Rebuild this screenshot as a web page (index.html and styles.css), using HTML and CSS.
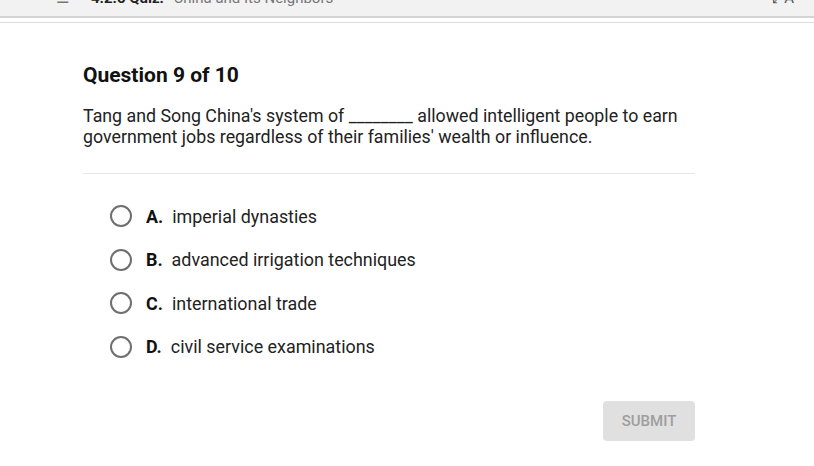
FILE: index.html
```html
<!DOCTYPE html>
<html lang="en">

<head>
  <meta charset="UTF-8">
  <meta name="viewport" content="width=device-width, initial-scale=1.0">
  <title>Quiz: China and Its Neighbors</title>
  <link rel="stylesheet" href="styles.css">
</head>

<body>
  <!-- Barra do topo, cortada pela janela -->
  <div class="topo">
    <span class="topo-menu">&#9776;</span>
    <span class="topo-titulo"><b>4.2.5 Quiz:</b> China and Its Neighbors</span>
    <span class="topo-icone">&#10530;A</span>
  </div>
  <div class="topo-linha"></div>

  <div class="quiz">
    <h2>Question 9 of 10</h2>
    <p class="pergunta">Tang and Song China's system of ________ allowed intelligent people to earn government jobs regardless of their families' wealth or influence.</p>

    <div class="divisor"></div>

    <ul class="opcoes">
      <li><span class="radio"></span><b>A.</b>imperial dynasties</li>
      <li><span class="radio"></span><b>B.</b>advanced irrigation techniques</li>
      <li><span class="radio"></span><b>C.</b>international trade</li>
      <li><span class="radio"></span><b>D.</b>civil service examinations</li>
    </ul>

    <div class="rodape">
      <button class="btn-enviar" disabled>SUBMIT</button>
    </div>
  </div>
</body>

</html>
```

FILE: styles.css
```css
body {
  margin: 0;
  font-family: Roboto, "Liberation Sans", sans-serif;
  background: white;
  color: #222;
}

/* barra cinza do topo */
.topo {
  height: 16px;
  overflow: hidden;
  background: #f2f2f2;
  border-bottom: 2px solid #d4d4d4;
  display: flex;
  align-items: flex-end;
  padding: 0 20px 0 56px;
  font-size: 15px;
  color: #777;
}

.topo span {
  margin-bottom: 9px;
}

.topo-menu {
  margin-right: 22px;
}

.topo-titulo b {
  color: #222;
  margin-right: 6px;
}

.topo-icone {
  margin-left: auto;
  color: #555;
}

.topo-linha {
  margin-top: 4px;
  height: 1px;
  background: #dcdcdc;
}

.quiz {
  width: 612px;
  margin-left: 83px;
}

.quiz h2 {
  font-size: 21px;
  font-weight: 700;
  color: #111;
  margin: 40px 0 0;
}

.pergunta {
  font-size: 17.8px;
  line-height: 20.5px;
  margin: 19px 0 0;
  color: #222;
}

.divisor {
  height: 1px;
  background: #e6e6e6;
  margin-top: 26px;
}

.opcoes {
  list-style: none;
  padding: 0 0 0 27px;
  margin: 31px 0 0;
}

.opcoes li {
  display: flex;
  align-items: center;
  height: 22px;
  margin-bottom: 21.6px;
  font-size: 17.9px;
  color: #222;
}

.opcoes b {
  color: #111;
  font-weight: 700;
  margin-right: 9px;
}

.radio {
  width: 18px;
  height: 18px;
  border: 2px solid #6f6f6f;
  border-radius: 50%;
  margin-right: 14px;
}

.rodape {
  display: flex;
  justify-content: flex-end;
  margin-top: 43px;
}

.btn-enviar {
  width: 92px;
  height: 40px;
  border: none;
  border-radius: 4px;
  background: #e0e0e0;
  color: #9e9e9e;
  font-family: Roboto, "Liberation Sans", sans-serif;
  font-size: 15px;
  font-weight: 500;
}
```
